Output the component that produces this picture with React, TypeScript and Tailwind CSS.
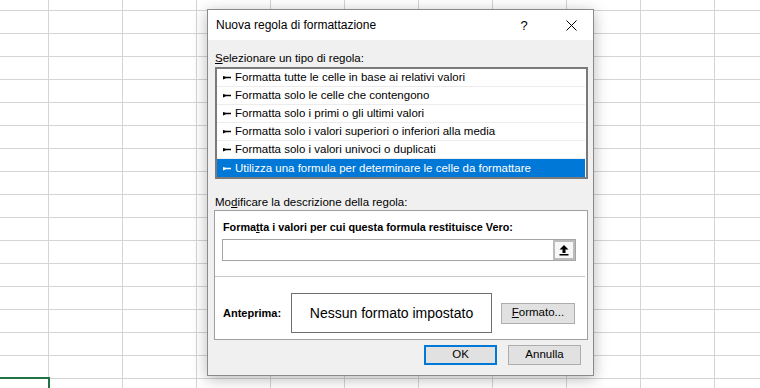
import React from 'react';

const COLS = [49, 74, 74, 74, 74, 74, 74, 74, 74, 74, 74];
const ROWS = 18;

const rules = [
  'Formatta tutte le celle in base ai relativi valori',
  'Formatta solo le celle che contengono',
  'Formatta solo i primi o gli ultimi valori',
  'Formatta solo i valori superiori o inferiori alla media',
  'Formatta solo i valori univoci o duplicati',
  'Utilizza una formula per determinare le celle da formattare',
];

const Bullet: React.FC<{ selected: boolean }> = ({ selected }) => (
  <svg width="8" height="4" viewBox="0 0 8 4" className="shrink-0">
    <polygon points="0,0 3,0.8 8,0.8 8,2.3 3,2.3 0,3.4" fill={selected ? '#ffffff' : '#000000'} />
  </svg>
);

const Sheet: React.FC = () => (
  <div className="grid grid-cols-[49px_repeat(10,74px)] grid-rows-[11px_repeat(17,23px)]">
    {Array.from({ length: ROWS * COLS.length }).map((_, i) => (
      <div key={i} className="border-r border-b border-[#d4d4d4] bg-white" />
    ))}
  </div>
);

export default function App() {
  return (
    <div className="relative w-[760px] h-[388px] overflow-hidden bg-white font-['Segoe_UI','Liberation_Sans',sans-serif] text-[11.5px] text-black">
      <Sheet />

      {/* selected cell */}
      <div className="absolute left-[-2px] top-[377px] w-[52px] h-[30px] border-2 border-[#217346]" />

      {/* dialog */}
      <div className="absolute left-[207px] top-[9px] w-[387px] h-[367px] border border-[#8a8a8a] bg-[#f0f0f0] shadow-[0_3px_14px_rgba(0,0,0,0.28)] flex flex-col">
        <div className="h-[30px] bg-white flex items-center pl-[8px]">
          <span className="text-[12px] leading-none">Nuova regola di formattazione</span>
          <span className="ml-auto w-[20px] text-center text-[13px] leading-none">?</span>
          <span className="w-[44px] flex justify-center ml-[15px]">
            <svg width="11" height="11" viewBox="0 0 11 11">
              <path d="M0.5 0.5 L10.5 10.5 M10.5 0.5 L0.5 10.5" stroke="#000" strokeWidth="1" />
            </svg>
          </span>
        </div>

        <div className="flex flex-col pl-[7px]">
          <div className="mt-[10px] h-[16px] leading-[16px]">
            <u>S</u>elezionare un tipo di regola:
          </div>
          <div className="mt-[1px] w-[373px] h-[112px] border-2 border-[#7a7a7a] bg-white flex flex-col pr-[1px]">
            {rules.map((r, i) => {
              const selected = i === rules.length - 1;
              return (
                <div
                  key={r}
                  className={`h-[18px] flex items-center gap-[4px] pl-[6px] pt-[1px] ${
                    selected ? 'bg-[#0078d7] text-white' : 'border-b border-[#ececec]'
                  }`}
                >
                  <Bullet selected={selected} />
                  <span className="leading-none">{r}</span>
                </div>
              );
            })}
          </div>

          <div className="mt-[15px] h-[16px] leading-[16px]">
            Mo<u>d</u>ificare la descrizione della regola:
          </div>
          <div className="ml-[-1px] w-[374px] h-[130px] border border-[#a0a0a0] bg-white flex flex-col">
            <div className="mt-[8px] ml-[8px] h-[16px] leading-[16px] font-bold text-[10.8px]">
              Forma<u>t</u>ta i valori per cui questa formula restituisce Vero:
            </div>
            <div className="mt-[4px] ml-[7px] w-[354px] h-[22px] border border-[#a5a5a5] flex justify-end">
              <div className="w-[22px] h-[20px] border-2 border-[#bcbcbc] bg-[#f7f7f7] flex items-center justify-center">
                <svg width="10" height="11" viewBox="0 0 10 11">
                  <path d="M5 0 L9.5 4.5 L6.5 4.5 L6.5 8 L3.5 8 L3.5 4.5 L0.5 4.5 Z" fill="#000" />
                  <rect x="0.5" y="9" width="9" height="1.5" fill="#000" />
                </svg>
              </div>
            </div>
            <div className="mt-[15px] w-[370px] h-px bg-[#c8c8c8]" />
            <div className="mt-[16px] flex items-center">
              <span className="ml-[8px] w-[68px] font-bold text-[11px]">Anteprima:</span>
              <div className="w-[201px] h-[40px] border border-[#6e6e6e] flex items-center justify-center text-[14px]">
                Nessun formato impostato
              </div>
              <button className="ml-[9px] w-[74px] h-[21px] bg-[#e1e1e1] border border-[#adadad] leading-none">
                <u>F</u>ormato...
              </button>
            </div>
          </div>

          <div className="mt-[5px] flex justify-end gap-[11px] pr-[12px]">
            <button className="w-[73px] h-[20px] bg-[#e1e1e1] border-2 border-[#0078d7] leading-none">OK</button>
            <button className="w-[73px] h-[20px] bg-[#e1e1e1] border border-[#adadad] leading-none">Annulla</button>
          </div>
        </div>
      </div>
    </div>
  );
}
